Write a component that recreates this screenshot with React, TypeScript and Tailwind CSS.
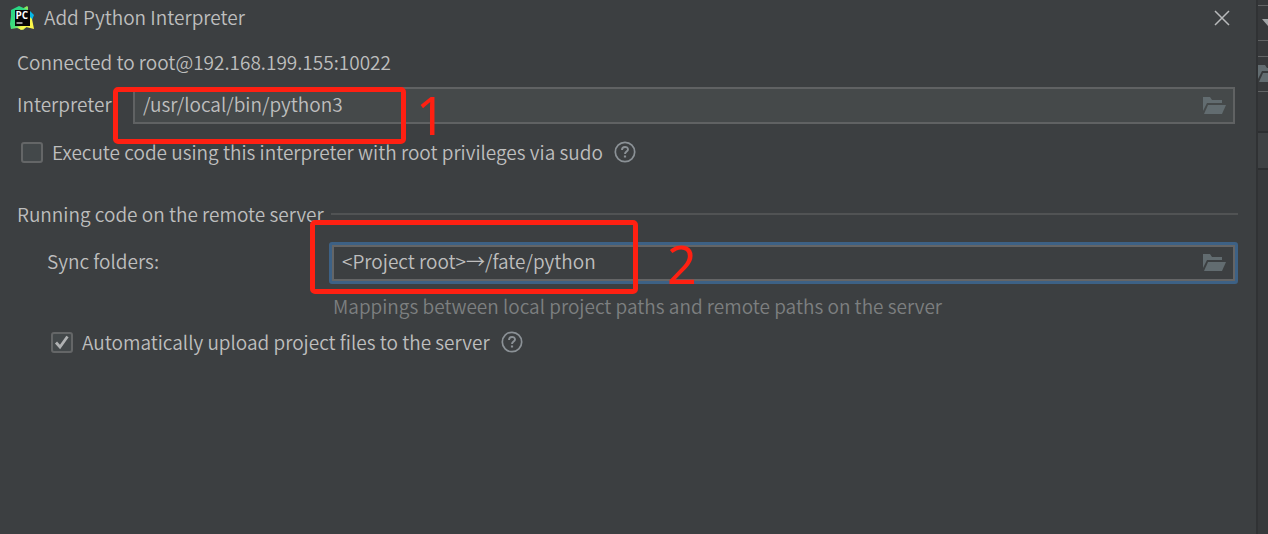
import React, { useState } from "react";

function PyCharmLogo() {
  return (
    <svg width="24" height="24" viewBox="0 0 24 24" aria-hidden="true">
      <defs>
        <linearGradient id="pc-green" x1="0" y1="0" x2="0.6" y2="1">
          <stop offset="0" stopColor="#21d789" />
          <stop offset="0.7" stopColor="#3fdc7c" />
          <stop offset="1" stopColor="#c5ee55" />
        </linearGradient>
        <linearGradient id="pc-yellow" x1="0" y1="0" x2="1" y2="1">
          <stop offset="0" stopColor="#5fe06a" />
          <stop offset="0.6" stopColor="#fcf84a" />
        </linearGradient>
      </defs>
      <path d="M18 7 20 5l4 4-2 5-4-2z" fill="#07b8e8" />
      <path d="M12 3 17 0l1 1v5h-5z" fill="#8be85f" />
      <path d="M1 4 9 0l9 4 1 15-6 5-6-2-6 1-1-5 1-8z" fill="url(#pc-green)" />
      <path d="M18 9l4 4 2 10-4-1-4-1-5 3-4-3 12-3z" fill="url(#pc-yellow)" />
      <rect x="5" y="4" width="15" height="16" fill="#050505" />
      <path d="M6.500 17h6" stroke="#e8e8e8" strokeWidth="1.300" />
      <text x="5.600" y="13" fontSize="10" fontWeight="700" fontFamily="Open Sans, sans-serif" fill="#fff">PC</text>
    </svg>
  );
}

function FolderIcon() {
  return (
    <svg width="23" height="18" viewBox="0 0 23 18" fill="#626c70" aria-hidden="true" className="shrink-0">
      <path d="M0 0h7l2 3h10v3H4L0 14z" />
      <path d="M5 8h18l-4 9H1z" />
    </svg>
  );
}

function HelpButton({ label }: { label: string }) {
  return (
    <button type="button" aria-label={label} className="shrink-0">
      <svg width="22" height="22" viewBox="0 0 22 22" fill="none" stroke="#8b9196" strokeWidth="1.700" aria-hidden="true">
        <circle cx="11" cy="11" r="9.700" />
        <path d="M8 9c0-4 6-4 6-.500 0 2-3 2.200-3 4.500" strokeWidth="1.900" />
        <path d="M11 14.500v2" strokeWidth="2.200" />
      </svg>
    </button>
  );
}

function Checkbox({ id, label, initial }: { id: string; label: string; initial: boolean }) {
  const [checked, setChecked] = useState(initial);
  return (
    <div className="flex h-7 items-center">
      <span className="relative mr-[9px] h-[21px] w-[22px] shrink-0">
        <input
          id={id}
          type="checkbox"
          checked={checked}
          onChange={(e) => setChecked(e.target.checked)}
          className="block h-full w-full appearance-none rounded-[3px] border-2 border-[#646667] bg-[#43484a]"
        />
        {checked && (
          <svg viewBox="0 0 22 21" className="pointer-events-none absolute inset-0" fill="none" stroke="#b0b2b3" strokeWidth="2.800" aria-hidden="true">
            <path d="M5 10.500 9 15 16.500 4.500" />
          </svg>
        )}
      </span>
      <label htmlFor={id} className="mr-[11px] whitespace-nowrap">{label}</label>
      <HelpButton label={"Help: " + label} />
    </div>
  );
}

function BackgroundStrip() {
  return (
    <aside className="flex w-3 shrink-0 flex-col overflow-hidden border-l-2 border-[#303234] bg-[#37393b]">
      <div className="mt-[5px] flex h-9 items-center justify-end border-y border-[#626465]">
        <svg width="6" height="8" viewBox="0 0 6 8" fill="#a0a3a5" aria-hidden="true">
          <path d="M0 0h6v7z" />
        </svg>
      </div>
      <div className="mt-[15px] flex h-9 items-center border-y border-[#626465]">
        <FolderIcon />
      </div>
      <div className="mt-[39px] h-[39px] border-y-2 border-[#2d2f31] bg-[#3f4244]" />
    </aside>
  );
}

export default function App() {
  const [interpreter, setInterpreter] = useState("/usr/local/bin/python3");
  const [folders, setFolders] = useState("<Project root>→/fate/python");
  return (
    <div className="flex min-h-screen bg-[#3c3f41] font-['Noto_Sans_CJK_SC',sans-serif] text-[19px] leading-7 font-[350] text-[#bebebe]">
      <main className="min-w-0 flex-1">
        <header className="flex h-9 items-center pr-[26px] pl-[10px]">
          <PyCharmLogo />
          <h1 className="ml-[10px] flex-1 pb-0.5 font-[350]">Add Python Interpreter</h1>
          <button type="button" aria-label="Close">
            <svg width="16" height="16" viewBox="0 0 16 16" stroke="#b8babb" strokeWidth="1.500" aria-hidden="true">
              <path d="M1 1l14 14M15 1 1 15" />
            </svg>
          </button>
        </header>

        <form className="pt-3 pr-[18px] pl-[17px]">
          <p>Connected to root@192.168.199.155:10022</p>

          <div className="mt-[11px] mr-[3px] flex items-center">
            <label htmlFor="interpreter" className="w-[116px] shrink-0 pb-1">Interpreter:</label>
            <div className="relative flex h-[37px] flex-1 items-center border-2 border-[#606263] bg-[#45494a] pr-[7px] pl-2">
              <input
                id="interpreter"
                value={interpreter}
                onChange={(e) => setInterpreter(e.target.value)}
                className="min-w-0 flex-1 bg-transparent pb-1 outline-none"
              />
              <button type="button" aria-label="Browse interpreter"><FolderIcon /></button>
              <div className="pointer-events-none absolute -top-0.5 -left-[22px] h-[57px] w-[293px] rounded-[5px] border-5 border-[#ff2012]" />
              <span className="pointer-events-none absolute top-[7px] left-[281px] font-['Noto_Sans',sans-serif] text-[52px] leading-[38px] font-normal text-[#ff2012]">1</span>
            </div>
          </div>

          <div className="mt-[14px] pl-1">
            <Checkbox id="sudo" label="Execute code using this interpreter with root privileges via sudo" initial={false} />
          </div>

          <fieldset className="mt-[34px]">
            <legend className="flex w-full items-center">
              <span className="mr-[7px]">Running code on the remote server</span>
              <span className="h-0.5 flex-1 bg-[#515354]" />
            </legend>

            <div className="mt-[14px] flex items-center pl-[30px]">
              <label htmlFor="folders" className="w-[282px] shrink-0 pb-1">Sync folders:</label>
              <div className="relative flex-1 rounded-[3px] border-3 border-[#3d6185]">
                <div className="flex h-9 items-center border-2 border-[#646566] pr-[7px] pl-2">
                  <input
                    id="folders"
                    value={folders}
                    onChange={(e) => setFolders(e.target.value)}
                    className="min-w-0 flex-1 bg-transparent pb-1 outline-none"
                  />
                  <button type="button" aria-label="Browse folders"><FolderIcon /></button>
                </div>
                <div className="pointer-events-none absolute -top-[25px] -left-[22px] h-[74px] w-[328px] rounded-[5px] border-5 border-[#ff2012]" />
                <span className="pointer-events-none absolute top-0 left-[335px] font-['Noto_Sans',sans-serif] text-[52px] leading-[38px] font-normal text-[#ff2012]">2</span>
              </div>
            </div>

            <p className="mt-2 pl-[316px] text-[#7d7f80]">
              Mappings between local project paths and remote paths on the server
            </p>

            <div className="mt-2 pl-[34px]">
              <Checkbox id="upload" label="Automatically upload project files to the server" initial={true} />
            </div>
          </fieldset>
        </form>
      </main>
      <BackgroundStrip />
    </div>
  );
}
